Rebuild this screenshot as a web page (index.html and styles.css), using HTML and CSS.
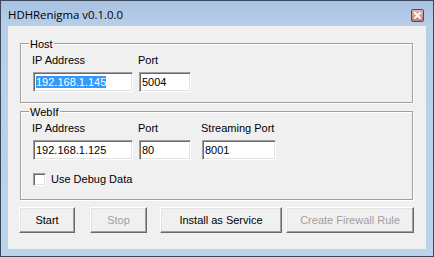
FILE: index.html
```html
<!DOCTYPE html>
<html>
<head>
  <title>HDHRenigma v0.1.0.0</title>
  <link rel="stylesheet" href="styles.css">
</head>
<body>
  <div class="window">
    <div class="titlebar">
      <span class="title">HDHRenigma v0.1.0.0</span>
      <span class="close-btn">
        <svg width="11" height="11" viewBox="0 0 11 11">
          <path d="M3 3 L8 8 M8 3 L3 8" stroke="#fff" stroke-width="1.8" stroke-linecap="square"/>
        </svg>
      </span>
    </div>

    <div class="client">
      <!-- Host settings -->
      <div class="group host">
        <div class="group-title">Host</div>
        <div class="fields">
          <div class="field ip">
            <span class="label">IP Address</span>
            <span class="textbox"><span class="selected">192.168.1.145</span></span>
          </div>
          <div class="field port">
            <span class="label">Port</span>
            <span class="textbox">5004</span>
          </div>
        </div>
      </div>

      <!-- WebIf settings -->
      <div class="group webif">
        <div class="group-title">WebIf</div>
        <div class="fields">
          <div class="field ip">
            <span class="label">IP Address</span>
            <span class="textbox">192.168.1.125</span>
          </div>
          <div class="field port">
            <span class="label">Port</span>
            <span class="textbox">80</span>
          </div>
          <div class="field stream">
            <span class="label">Streaming Port</span>
            <span class="textbox">8001</span>
          </div>
        </div>
        <div class="checkrow">
          <span class="checkbox"></span>
          <span class="checklabel">Use Debug Data</span>
        </div>
      </div>

      <div class="buttons">
        <button type="button" class="btn start">Start</button>
        <button type="button" class="btn stop" disabled>Stop</button>
        <button type="button" class="btn install">Install as Service</button>
        <button type="button" class="btn firewall" disabled>Create Firewall Rule</button>
      </div>
    </div>
  </div>
</body>
</html>
```

FILE: styles.css
```css
body {
  margin: 0;
  padding: 0;
  background-color: #fff;
}

/* Outer window frame */
.window {
  width: 434px;
  height: 257px;
  box-sizing: border-box;
  border: 1px solid #3a4a5c;
  background: linear-gradient(to bottom, #a7c1e0 0px, #b8cfe9 25px, #bcd3ec 100%);
  display: flex;
  flex-direction: column;
}

.titlebar {
  height: 25px;
  display: flex;
  align-items: center;
  justify-content: space-between;
  padding: 0 9px 0 7px;
}

.title {
  font-family: "Open Sans", "DejaVu Sans", sans-serif;
  font-size: 11.4px;
  color: #000;
  margin-top: 1px;
}

.close-btn {
  width: 11px;
  height: 11px;
  border: 1px solid #7a3a38;
  border-radius: 2px;
  background: linear-gradient(to bottom, #e4b6b1, #c47e77);
  display: flex;
  margin-top: 4px;
}

/* Dialog client area */
.client {
  margin: 0 7px;
  height: 223px;
  background-color: #f0f0f0;
  font-family: "Liberation Sans", Arial, sans-serif;
  font-size: 11px;
  color: #000;
  padding: 17px 0 0 12px;
  box-sizing: border-box;
}

.group {
  width: 393px;
  box-sizing: border-box;
  border: 1px solid #a0a0a0;
  box-shadow: 1px 1px 0 #fff, inset 1px 1px 0 #fff;
  padding: 0 0 0 11px;
}

.host {
  height: 60px;
}

.webif {
  height: 89px;
  margin-top: 8px;
}

.group-title {
  width: fit-content;
  margin: -6px 0 0 -3px;
  padding: 0 1px;
  line-height: 13px;
  background-color: #f0f0f0;
}

.fields {
  display: flex;
  margin-top: 3px;
}

.field {
  display: flex;
  flex-direction: column;
  gap: 5px;
}

.label {
  line-height: 13px;
}

.textbox {
  height: 20px;
  box-sizing: border-box;
  background-color: #fff;
  border: 1px solid;
  border-color: #a0a0a0 #fff #fff #a0a0a0;
  box-shadow: inset 1px 1px 0 #696969, inset -1px -1px 0 #e3e3e3;
  padding: 3px 0 0 2px;
  line-height: 13px;
  margin-left: 1px;
}

.ip .textbox {
  width: 100px;
}

.port {
  margin-left: 5px;
}

.port .textbox {
  width: 52px;
}

.stream {
  margin-left: 10px;
}

.stream .textbox {
  width: 74px;
}

.selected {
  background-color: #3399ff;
  color: #fff;
}

.checkrow {
  display: flex;
  align-items: center;
  margin-top: 13px;
  margin-left: 1px;
}

.checkbox {
  width: 13px;
  height: 13px;
  box-sizing: border-box;
  background-color: #fff;
  border: 1px solid;
  border-color: #a0a0a0 #fff #fff #a0a0a0;
  box-shadow: inset 1px 1px 0 #696969, inset -1px -1px 0 #e3e3e3;
}

.checklabel {
  margin-left: 5px;
  line-height: 13px;
}

/* Bottom button row */
.buttons {
  display: flex;
  margin-top: 7px;
  margin-left: -1px;
}

.btn {
  height: 26px;
  box-sizing: border-box;
  background-color: #f0f0f0;
  border: 1px solid;
  border-color: #fff #696969 #696969 #fff;
  box-shadow: inset -1px -1px 0 #a0a0a0, inset 1px 1px 0 #e3e3e3;
  font-family: "Liberation Sans", Arial, sans-serif;
  font-size: 11px;
  color: #000;
  padding: 0;
  margin: 0;
}

.btn:disabled {
  color: #a0a0a0;
}

.start {
  width: 56px;
}

.stop {
  width: 57px;
  margin-left: 15px;
}

.install {
  width: 122px;
  margin-left: 13px;
}

.firewall {
  width: 128px;
  margin-left: 4px;
}
```
